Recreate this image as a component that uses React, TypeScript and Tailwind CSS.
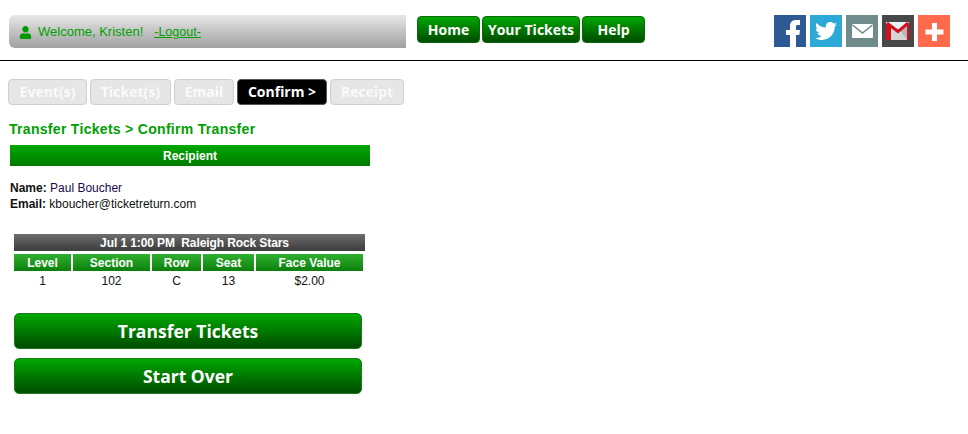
import React from 'react';
import { FaTwitter, FaUser } from 'react-icons/fa';

const navItems = [
  { label: 'Home', w: 'w-[63px]' },
  { label: 'Your Tickets', w: 'w-[98px]' },
  { label: 'Help', w: 'w-[63px]' },
];

const steps = [
  { label: 'Event(s)', w: 'w-[79px]' },
  { label: 'Ticket(s)', w: 'w-[81px]' },
  { label: 'Email', w: 'w-[60px]' },
  { label: 'Confirm >', w: 'w-[90px]', active: true },
  { label: 'Receipt', w: 'w-[74px]' },
];

const columns = [
  { label: 'Level', value: '1', w: 'w-[57px]' },
  { label: 'Section', value: '102', w: 'w-[77px]' },
  { label: 'Row', value: 'C', w: 'w-[49px]' },
  { label: 'Seat', value: '13', w: 'w-[51px]' },
  { label: 'Face Value', value: '$2.00', w: 'w-[107px]' },
];

const open = "font-['Open_Sans',sans-serif]";
const arial = "font-['Liberation_Sans',Arial,sans-serif]";

const FacebookIcon = () => (
  <svg viewBox="0 0 32 32" className="w-8 h-8">
    <path d="M16 32 V20 H12 V15 H16 V11 C16 7 18.5 5 22 5 H26 V10 H23.5 C22.5 10 22 10.7 22 11.5 V15 H26 L25.3 20 H22 V32 Z" fill="#fff" />
  </svg>
);

const MailIcon = () => (
  <svg viewBox="0 0 32 32" className="w-8 h-8">
    <rect x="6" y="9" width="21" height="14" fill="#fff" rx="1" />
    <path d="M6.5 10 L16.5 18 L26.5 10" fill="none" stroke="#708b8b" strokeWidth="1.6" />
  </svg>
);

const GmailIcon = () => (
  <svg viewBox="0 0 32 32" className="w-8 h-8">
    <rect x="4" y="7" width="23" height="18" fill="#d6d6d6" />
    <path d="M6 7 L26 7 L16 15 Z" fill="#e6f4f4" />
    <path d="M18 15 L25 25 L25 9 Z" fill="#b4b8bc" />
    <path d="M4 25 L4 9 L6 7 L16 14.5 L25 7 L27 8.5 L27 25 L25 25 L25 11 L16 18.5 L9 13 L9 25 Z" fill="#d40f1e" />
  </svg>
);

const PlusIcon = () => (
  <svg viewBox="0 0 32 32" className="w-8 h-8">
    <path d="M14 8 H19 V14.5 H25.5 V19.5 H19 V26 H14 V19.5 H7.5 V14.5 H14 Z" fill="#fff" />
  </svg>
);

const App: React.FC = () => {
  return (
    <div className={`w-[968px] h-[434px] bg-white overflow-hidden ${arial}`}>
      {/* top bar */}
      <div className="h-[61px] border-b border-black flex items-start pt-[15px] pl-[9px]">
        <div className="w-[397px] h-[33px] rounded-l-[6px] bg-gradient-to-b from-[#e8e8e8] to-[#a0a0a0] flex items-center pl-[10px] pt-[1px] text-[13px] text-[#00a000]">
          <FaUser className="w-[13px] h-[13px] text-[#009a00]" />
          <span className="ml-[6px]">Welcome, Kristen!</span>
          <a className="ml-[11px] underline text-[12.5px]">-Logout-</a>
        </div>
        <div className="ml-[11px] mt-[1px] flex gap-[2px]">
          {navItems.map(n => (
            <div
              key={n.label}
              className={`${n.w} h-[27px] rounded-[4px] border border-[#0a6a0a] bg-gradient-to-b from-[#00a800] to-[#004d00] flex items-center justify-center text-white font-bold text-[14px] ${open}`}
            >
              {n.label}
            </div>
          ))}
        </div>
        <div className="ml-[129px] flex gap-1">
          <div className="w-8 h-8 bg-[#2d5a94]"><FacebookIcon /></div>
          <div className="w-8 h-8 bg-[#2ca9d6] flex items-center justify-center">
            <FaTwitter className="w-[22px] h-[22px] text-white" />
          </div>
          <div className="w-8 h-8 bg-[#708b8b]"><MailIcon /></div>
          <div className="w-8 h-8 bg-[#484848]"><GmailIcon /></div>
          <div className="w-8 h-8 bg-[#ff6b4c]"><PlusIcon /></div>
        </div>
      </div>

      {/* steps */}
      <div className="mt-[18px] ml-[8px] flex gap-[3px]">
        {steps.map(s => (
          <div
            key={s.label}
            className={`${s.w} h-[26px] pb-[2px] rounded-[4px] border flex items-center justify-center font-bold text-[14px] ${open} ${
              s.active ? 'bg-black border-[#555] text-white' : 'bg-[#e6e6e6] border-[#cfcfcf] text-[#fafafa]'
            }`}
          >
            {s.label}
          </div>
        ))}
      </div>

      <h1 className="mt-[16px] ml-[9px] text-[14px] leading-[16px] font-bold tracking-[0.3px] text-[#00a000]">
        Transfer Tickets &gt; Confirm Transfer
      </h1>

      {/* recipient */}
      <div className="mt-[8px] ml-[10px] w-[360px] h-[21px] bg-gradient-to-b from-[#00a800] to-[#007a00] flex items-center justify-center text-white font-bold text-[12px]">
        Recipient
      </div>
      <div className="mt-[15px] ml-[10px] text-[12px] leading-[15px] text-[#111]">
        <div><b>Name:</b> <span className="text-[#1a0a4a]">Paul Boucher</span></div>
        <div className="pt-[1px]"><b>Email:</b> kboucher@ticketreturn.com</div>
      </div>

      {/* ticket table */}
      <div className="mt-[22px] ml-[14px] w-[351px]">
        <div className="h-[17px] pl-[10px] bg-gradient-to-b from-[#6e6e6e] to-[#3c3c3c] flex items-center justify-center text-white font-bold text-[12px] tracking-[-0.1px] whitespace-pre">
          Jul 1 1:00 PM  Raleigh Rock Stars
        </div>
        <div className="mt-[3px] flex gap-[2px]">
          {columns.map(c => (
            <div key={c.label} className={`${c.w} h-[17px] bg-gradient-to-b from-[#2fb02f] to-[#0a800a] flex items-center justify-center text-white font-bold text-[12px]`}>
              {c.label}
            </div>
          ))}
        </div>
        <div className="flex gap-[2px]">
          {columns.map(c => (
            <div key={c.label} className={`${c.w} h-[20px] flex items-center justify-center text-[12px] text-[#111]`}>
              {c.value}
            </div>
          ))}
        </div>
      </div>

      {/* actions */}
      <div className="mt-[22px] ml-[14px] w-[348px] flex flex-col gap-[9px]">
        {['Transfer Tickets', 'Start Over'].map(label => (
          <button
            key={label}
            className={`h-[36px] rounded-[5px] border border-[#1a7a1a] bg-gradient-to-b from-[#00a800] to-[#004d00] text-white font-bold text-[17.5px] ${open}`}
          >
            {label}
          </button>
        ))}
      </div>
    </div>
  );
};

export default App;
